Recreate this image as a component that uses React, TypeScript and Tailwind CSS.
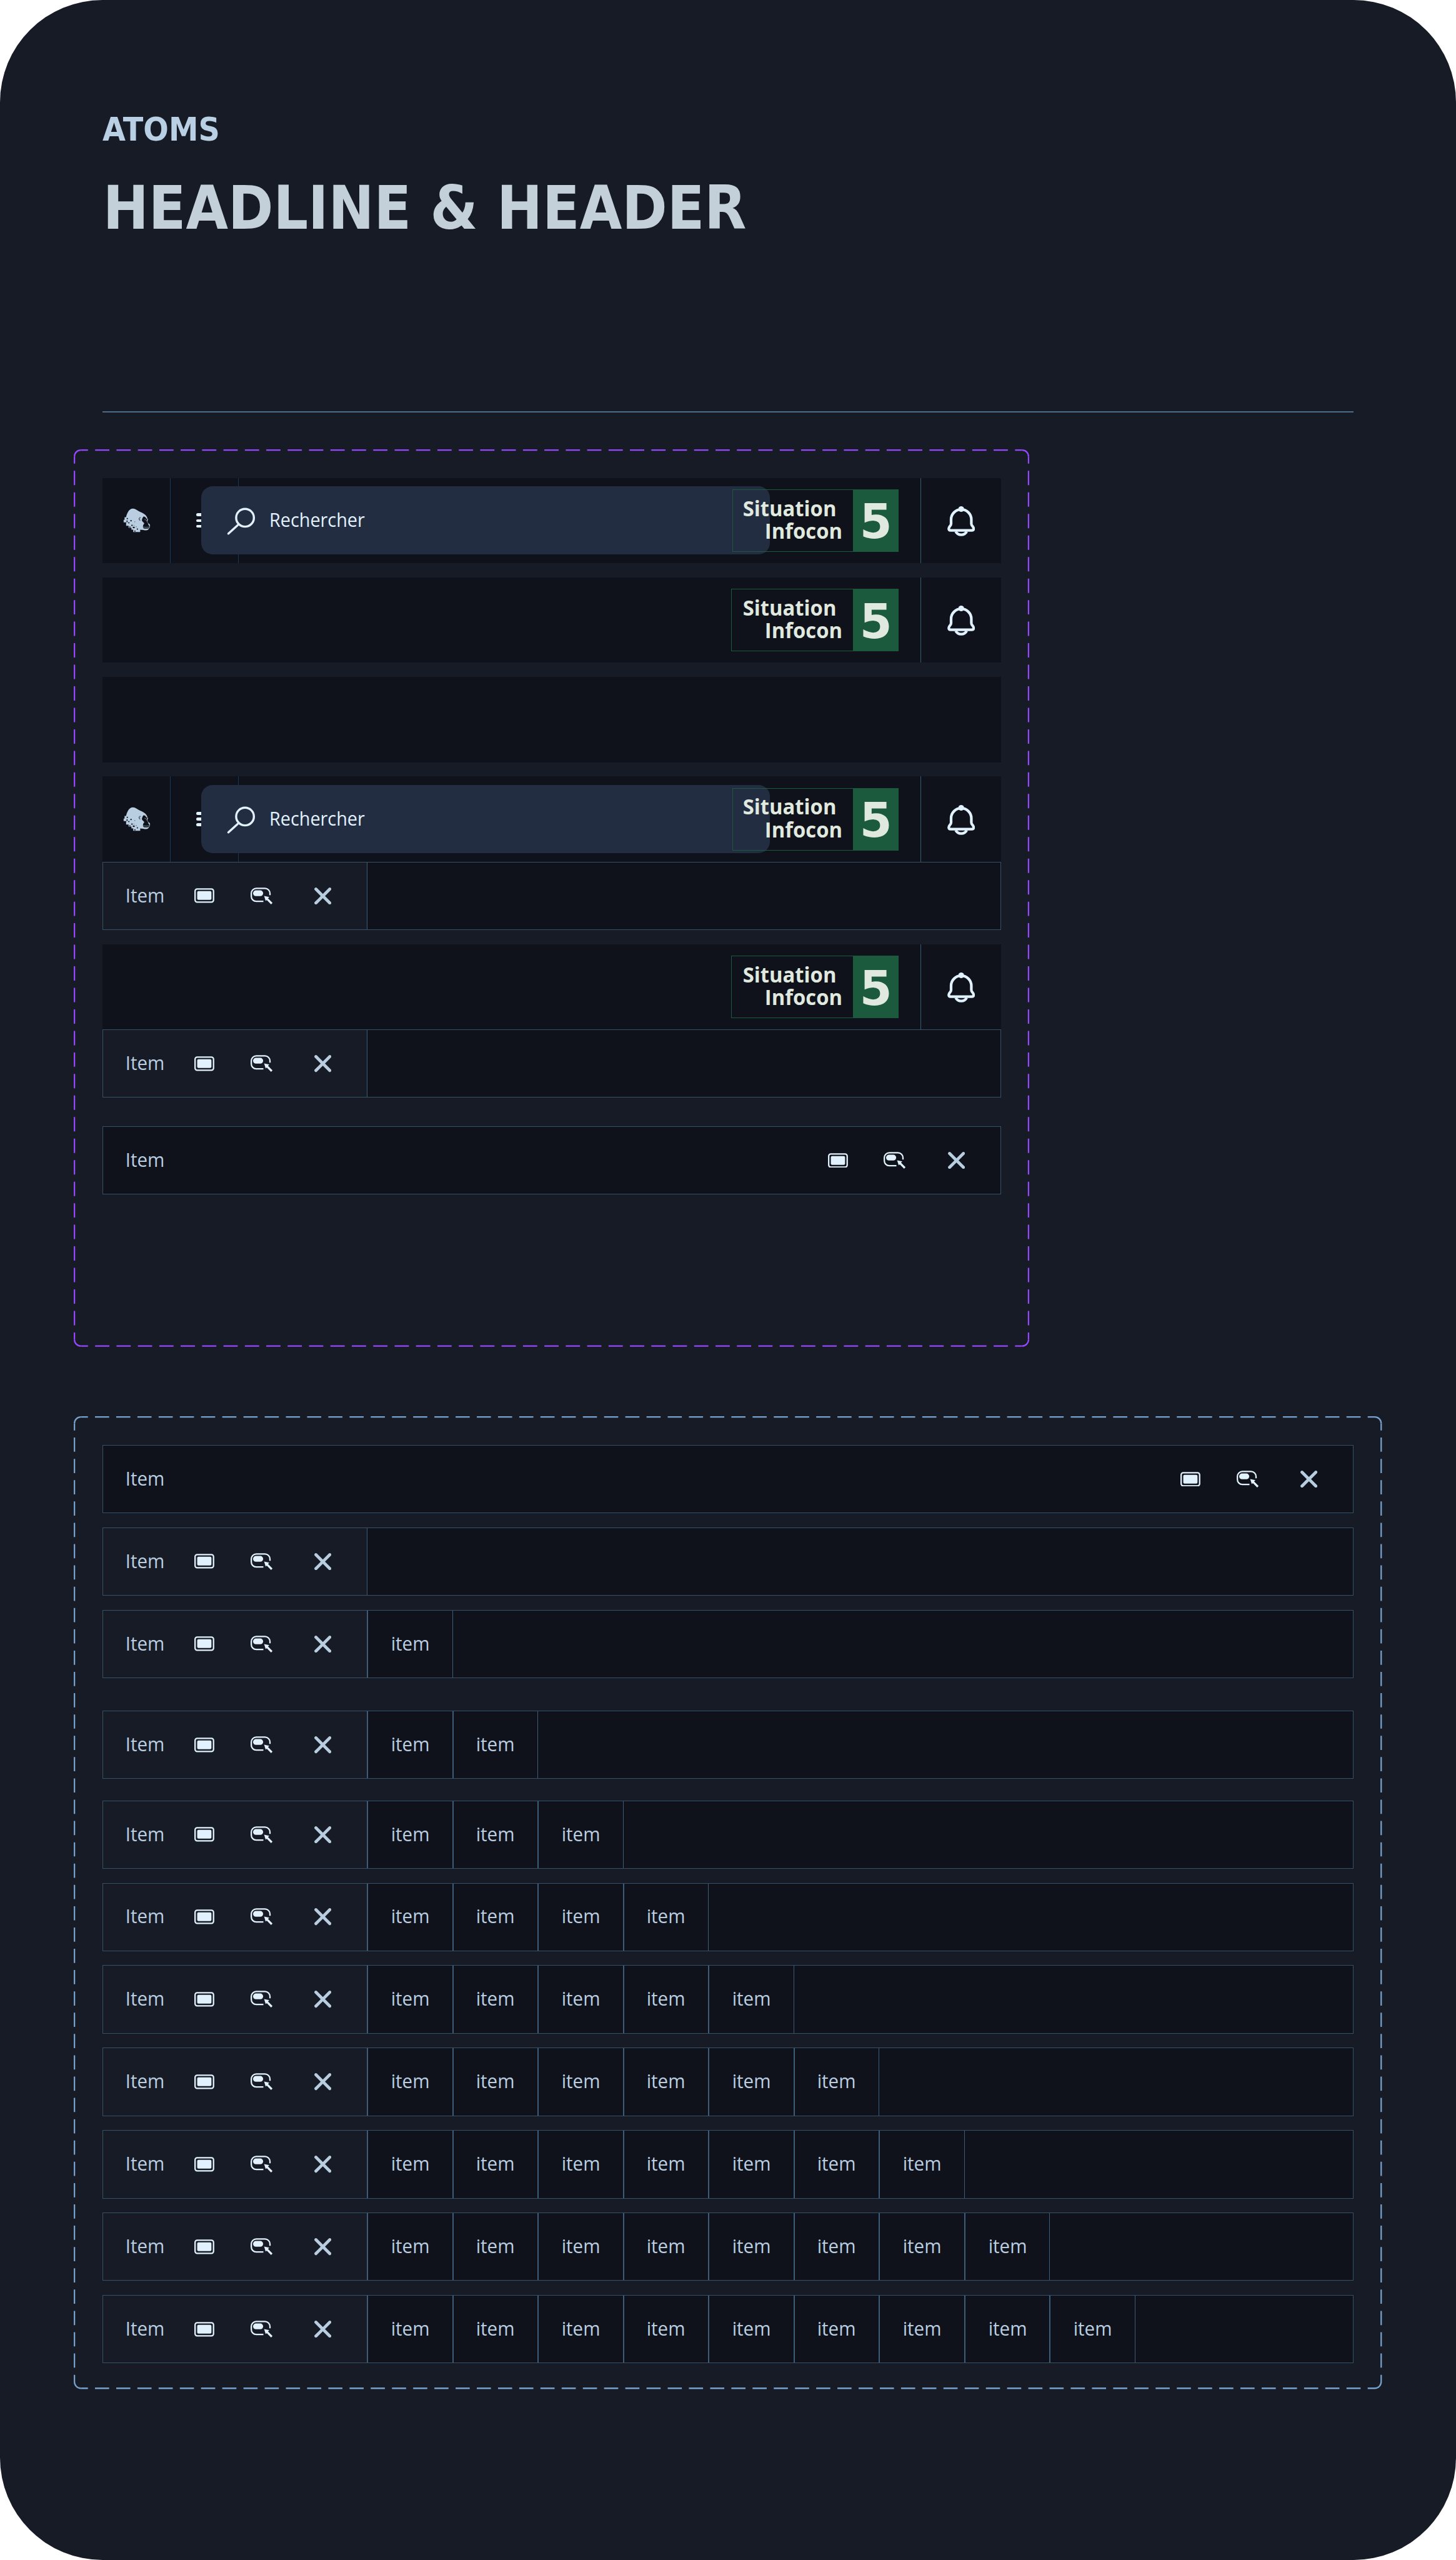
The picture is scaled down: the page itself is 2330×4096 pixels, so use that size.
import type { ReactNode } from "react";

const SANS = "font-['Open_Sans','Noto_Sans',sans-serif]";
const DISPLAY = "font-['DejaVu_Sans_Condensed','DejaVu_Sans',sans-serif]";

/* Dashed outline: every side starts and ends on a half dash so corners stay solid. */
function DashedOutline({ width, height, color }: { width: number; height: number; color: string }) {
  const r = 20;
  const side = (length: number) => {
    const pitch = length / Math.round(length / 60);
    return { strokeDasharray: `${(pitch * 2) / 3} ${pitch / 3}`, strokeDashoffset: pitch / 3 };
  };
  const h = side(width - 2 * r);
  const v = side(height - 2 * r);
  const R = width - 2;
  const B = height - 2;
  return (
    <svg
      className="pointer-events-none absolute inset-0 h-full w-full"
      viewBox={`0 0 ${width} ${height}`}
      preserveAspectRatio="none"
      fill="none"
      stroke={color}
      strokeWidth={4}
    >
      <path d={`M${r} 2H${width - r}`} {...h} />
      <path d={`M${r} ${B}H${width - r}`} {...h} />
      <path d={`M2 ${r}V${height - r}`} {...v} />
      <path d={`M${R} ${r}V${height - r}`} {...v} />
      <path
        d={`M2 ${r}A18 18 0 0 1 ${r} 2M${width - r} 2A18 18 0 0 1 ${R} ${r}M${R} ${height - r}A18 18 0 0 1 ${width - r} ${B}M${r} ${B}A18 18 0 0 1 2 ${height - r}`}
      />
    </svg>
  );
}

const HOLES = [
  [62, 115, 10, 10],
  [93, 133, 11, 10],
  [75, 151, 10, 9],
  [61, 136, 8, 15],
  [101, 172, 11, 10],
  [84, 187, 9, 8],
  [114, 189, 15, 12],
  [147, 204, 10, 9],
  [126, 221, 10, 9],
  [128, 145, 5, 5],
  [121, 174, 4, 4],
  [140, 187, 5, 5],
];

function GorillaLogo() {
  return (
    <svg className="h-[51.2px] w-[56.9px]" viewBox="0 0 300 270">
      <path
        fill="#bacee1"
        d="M57 108C64 72 84 37 112 36C132 36 146 46 160 56C180 67 202 73 217 87C229 98 234 108 236 117L243 126C241 134 233 138 236 146C240 156 248 160 256 168C262 180 260 194 248 206C244 214 240 219 226 219C208 219 196 213 176 213V234H117V213H102V198H78V180H57V152H36V131H44V108Z"
      />
      <path
        fill="#0f121a"
        d="M206 101L223 109C221 117 228 121 239 122C235 128 229 130 230 139C232 151 240 154 244 163C242 172 250 176 255 183C256 190 252 198 246 202C234 206 213 206 203 200C195 190 200 174 211 160C205 150 192 146 190 134C192 118 198 108 206 101Z"
      />
      <path fill="none" stroke="#bacee1" strokeWidth="3" d="M200 191q27 6 54 0M212 127l10 6 3-5" />
      <path fill="none" stroke="#0f121a" strokeWidth="4" d="M181 113c-11-7-17 4-15 12s4 12 11 10M173 119q-3 6 0 10" />
      <g fill="#0f121a">
        {HOLES.map(([x, y, w, h]) => (
          <rect key={`${x}-${y}`} x={x} y={y} width={w} height={h} />
        ))}
      </g>
    </svg>
  );
}

function SearchIcon() {
  return (
    <svg
      className="mt-[3.4px] h-[45.5px] w-[46.6px] shrink-0"
      viewBox="0 0 82 80"
      fill="none"
      stroke="#e1f2fe"
      strokeWidth="6"
      strokeLinecap="round"
    >
      <circle cx="53" cy="28.8" r="25" />
      <path d="M32 50L6.200 73.500" />
    </svg>
  );
}

function BellIcon() {
  return (
    <svg className="mt-[2.3px] h-[47.8px] w-[44.4px]" viewBox="0 0 78 84" fill="none" stroke="#e1f2fe" strokeWidth="7.500">
      <circle cx="39" cy="8" r="8" fill="#e1f2fe" stroke="none" />
      <path d="M10.500 49V37.500a28.500 28.500 0 0 1 57 0V49c0 6 6.500 8 6.500 14 0 3-2 5-5 5H9c-3 0-5-2-5-5 0-6 6.500-8 6.500-14Z" />
      <path d="M23.500 71c3 5.500 8 9.200 15.500 9.200s12.500-3.700 15.500-9.200" />
    </svg>
  );
}

function ScreenIcon() {
  return (
    <svg className="h-[23.9px] w-[31.9px]" viewBox="0 0 56 42">
      <rect x="2" y="2.500" width="52" height="37" rx="6" fill="none" stroke="#e1f2fe" strokeWidth="4" />
      <rect x="8" y="8.500" width="40" height="24.500" rx="3.500" fill="#e1f2fe" />
    </svg>
  );
}

function SelectIcon() {
  return (
    <svg className="h-[27.3px] w-[35.3px]" viewBox="0 0 62 48">
      <path
        d="M36 39H16A14 14 0 0 1 2 25V16.500A14 14 0 0 1 16 2.500H40.500A14 14 0 0 1 54.500 16.500V21.700"
        fill="none"
        stroke="#e1f2fe"
        strokeWidth="4"
      />
      <rect x="7" y="8" width="28.300" height="16.300" rx="8" fill="#e1f2fe" />
      <path d="M38 23.700L52.700 27L49 30.500L61.700 43.300L57.700 47.300L45.500 35L42.500 38Z" fill="#e1f2fe" />
    </svg>
  );
}

function CloseIcon() {
  return (
    <svg className="h-[27.3px] w-[27.3px]" viewBox="0 0 48 48" stroke="#b9cde1" strokeWidth="8.500" strokeLinecap="round">
      <path d="M4.500 4.500L43.500 43.500M43.500 4.500L4.500 43.500" />
    </svg>
  );
}

function Actions() {
  return (
    <div className="flex items-center pr-[57px]">
      <ScreenIcon />
      <div className="ml-[57.4px]">
        <SelectIcon />
      </div>
      <div className="ml-[67.1px]">
        <CloseIcon />
      </div>
    </div>
  );
}

function Label({ children }: { children: ReactNode }) {
  return (
    <span className="scale-x-[0.98] pb-[1.400px] text-[30.1px] leading-[40px] text-[#bacee2]">{children}</span>
  );
}

function ItemBar({ split = true, tabs = 0 }: { split?: boolean; tabs?: number }) {
  return (
    <div className="flex h-[109.2px] shrink-0 border border-[#36506a] bg-[#0f121a]">
      <div
        className={
          split
            ? "flex w-[423.4px] shrink-0 items-center justify-between border-r border-[#3d5c77] bg-[#171b25] pl-[35.600px]"
            : "flex flex-1 items-center justify-between pl-[35.600px]"
        }
      >
        <Label>Item</Label>
        <Actions />
      </div>
      {Array.from({ length: tabs }, (_, i) => (
        <div
          key={i}
          className="flex w-[136.52px] shrink-0 items-center justify-center border-x border-[#3d5c77]"
        >
          <Label>item</Label>
        </div>
      ))}
    </div>
  );
}

function Infocon({ narrow }: { narrow: boolean }) {
  return (
    <div
      className={`z-10 mr-[35.3px] flex h-[100.1px] border border-[#1b5a3c] font-bold text-[#e0e9df] ${narrow ? "w-[266.2px]" : "w-[268.5px]"}`}
    >
      <div className="flex flex-1 flex-col items-end justify-center pr-[17.6px] pb-[3.500px] text-[33.85px] leading-[36.4px]">
        <span className="mr-[9.1px] origin-right scale-x-[0.97]">Situation</span>
        <span className="origin-right scale-x-[0.97]">Infocon</span>
      </div>
      <div className="-my-px -mr-px flex w-[72.8px] items-center justify-center bg-[#1b5a3c] pt-[5px] font-['DejaVu_Sans',sans-serif] text-[76.5px] leading-[90px]">
        <span className="scale-x-[0.975]">5</span>
      </div>
    </div>
  );
}

function Header({ search = false, empty = false }: { search?: boolean; empty?: boolean }) {
  return (
    <div className="relative flex h-[136.5px] shrink-0 items-center bg-[#0f121a]">
      {search && (
        <>
          <div className="flex h-full w-[109.2px] items-center border-r border-[#1e3655] pl-[27.3px]">
            <GorillaLogo />
          </div>
          <div className="flex h-full w-[109.2px] flex-col justify-center gap-[4.55px] border-r border-[#1e3655] pl-[41px]">
            <span className="h-[4.55px] w-[27.3px] rounded-full bg-[#e1f2fe]" />
            <span className="h-[4.55px] w-[27.3px] rounded-full bg-[#e1f2fe]" />
            <span className="h-[4.55px] w-[27.3px] rounded-full bg-[#e1f2fe]" />
          </div>
          <div className="absolute top-[13.65px] left-[158.1px] flex h-[109.2px] w-[910.2px] items-center rounded-[18.2px] bg-[#232d41] pl-[40.4px]">
            <SearchIcon />
            <span className="ml-[22.3px] origin-left scale-x-[0.957] pb-[1.400px] text-[30.1px] leading-[40px] text-[#e1f2fe]">
              Rechercher
            </span>
          </div>
        </>
      )}
      {!empty && (
        <div className="ml-auto flex h-full items-center">
          <Infocon narrow={search} />
          <div className="flex h-full w-[128.6px] items-center justify-center border-l border-[#3a5872]">
            <BellIcon />
          </div>
        </div>
      )}
    </div>
  );
}

export default function App() {
  return (
    <div className="h-[4096px] w-[2330px] overflow-hidden bg-white">
      <main className={`h-full rounded-[163.8px] bg-[#171b25] px-[118.3px] pt-[177px] ${SANS}`}>
        <header className={`px-[45.5px] font-bold whitespace-nowrap ${DISPLAY}`}>
          <p className="origin-left scale-x-[1.03] text-[51.5px] leading-[60px] text-[#b9cfe4]">ATOMS</p>
          <h1 className="mt-[39.6px] ml-px text-[97px] leading-[112px] text-[#c4d0d9]">HEADLINE &amp; HEADER</h1>
          <div className="mt-[269.1px] h-[2.3px] w-[2002.3px] bg-[#4c6c88]" />
        </header>

        <section className="relative mt-[59.1px] flex h-[1435.8px] w-[1529.1px] flex-col gap-[22.75px] px-[45.5px] pt-[45.5px]">
          <DashedOutline width={2688} height={2524} color="#9747ff" />
          <Header search />
          <Header />
          <Header empty />
          <div>
            <Header search />
            <ItemBar />
          </div>
          <div>
            <Header />
            <ItemBar />
          </div>
          <div className="mt-[22.75px]">
            <ItemBar split={false} />
          </div>
        </section>

        <section className="relative mt-[111.5px] flex h-[1556.4px] w-[2093.4px] flex-col gap-[22.75px] px-[45.5px] pt-[45.5px]">
          <DashedOutline width={3680} height={2736} color="#76a2cd" />
          <ItemBar split={false} />
          <ItemBar />
          <ItemBar tabs={1} />
          <div className="mt-[29.6px] mb-[11.4px]">
            <ItemBar tabs={2} />
          </div>
          {[3, 4, 5, 6, 7, 8, 9].map((tabs) => (
            <ItemBar key={tabs} tabs={tabs} />
          ))}
        </section>
      </main>
    </div>
  );
}
